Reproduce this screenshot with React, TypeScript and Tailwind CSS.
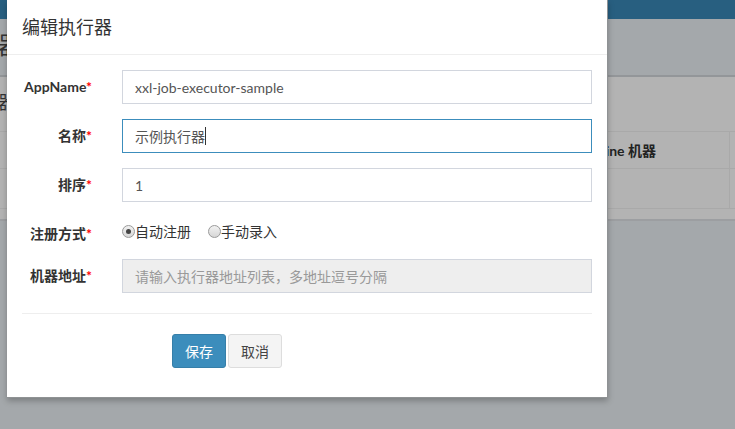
import React from "react";

const font = { fontFamily: 'Lato, "Noto Sans CJK SC", sans-serif' };

function Label({ text }: { text: string }) {
  return (
    <div className="w-[85px] shrink-0 pr-[15px] text-right text-[14px] font-bold text-[#333] leading-[20px] pt-[7px]">
      {text}
      <span className="text-[#ff0000]">*</span>
    </div>
  );
}

function Radio({ checked, text }: { checked?: boolean; text: string }) {
  return (
    <div className="flex items-center">
      <span className="w-[13px] h-[13px] rounded-full border border-[#9a9a9a] bg-gradient-to-b from-[#f2f2f2] to-[#d6d6d6] flex items-center justify-center">
        {checked && <span className="w-[5px] h-[5px] rounded-full bg-[#444]" />}
      </span>
      <span className="text-[14px] text-[#333] leading-[20px]">{text}</span>
    </div>
  );
}

export default function App() {
  return (
    <div className="relative w-[735px] h-[429px] overflow-hidden bg-[#a4a8ab]" style={font}>
      {/* background page */}
      <div className="h-[19px] bg-[#285f80]" />
      <div className="h-[56px] flex items-center">
        <span className="text-[24px] text-[#333] leading-none -mt-[4px] -ml-[2px]">器</span>
      </div>
      <div className="h-[2px] bg-[#939699]" />
      <div className="bg-[#b3b3b3] h-[142px] flex flex-col">
        <div className="h-[54px] flex items-center">
          <span className="text-[18px] text-[#333] leading-none -ml-[2px] mb-[4px]">器</span>
        </div>
        <div className="h-[38px] border-t border-b border-[#a9a9a9] flex">
          <div className="w-[730px] border-r border-[#a9a9a9] flex items-center justify-end pr-[73px]">
            <span className="text-[14px] font-bold text-[#222]">OnLine 机器</span>
          </div>
        </div>
        <div className="h-[40px] border-b border-[#a9a9a9] flex">
          <div className="w-[730px] border-r border-[#a9a9a9]" />
        </div>
      </div>
      <div className="h-[2px] bg-[#9c9ea1]" />

      {/* modal */}
      <div className="absolute left-[7px] top-0 w-[601px] h-[398px] bg-white border-r border-b border-[#8f9294] shadow-[0_3px_6px_rgba(0,0,0,0.25)]">
        <div className="h-[55px] border-b border-[#eeeeee] pl-[15px] flex items-center">
          <span className="text-[18px] font-normal text-[#333] leading-none">编辑执行器</span>
        </div>
        <div className="px-[15px] pt-[15px]">
          <div className="flex mb-[15px]">
            <Label text="AppName" />
            <div className="flex-1 pl-[15px]">
              <div className="h-[34px] border border-[#d2d6de] px-[12px] flex items-center text-[14px] text-[#555]">
                xxl-job-executor-sample
              </div>
            </div>
          </div>
          <div className="flex mb-[15px]">
            <Label text="名称" />
            <div className="flex-1 pl-[15px]">
              <div className="h-[34px] border border-[#3c8dbc] px-[12px] flex items-center text-[14px] text-[#555]">
                示例执行器<span className="w-px h-[18px] bg-[#333]" />
              </div>
            </div>
          </div>
          <div className="flex mb-[15px]">
            <Label text="排序" />
            <div className="flex-1 pl-[15px]">
              <div className="h-[34px] border border-[#d2d6de] px-[12px] flex items-center text-[14px] text-[#555]">
                1
              </div>
            </div>
          </div>
          <div className="flex mb-[15px] h-[27px]">
            <Label text="注册方式" />
            <div className="flex-1 pl-[15px] pt-[2px] flex gap-[17px]">
              <Radio checked text="自动注册" />
              <Radio text="手动录入" />
            </div>
          </div>
          <div className="flex">
            <Label text="机器地址" />
            <div className="flex-1 pl-[15px]">
              <div className="h-[34px] border border-[#d2d6de] bg-[#eeeeee] px-[12px] flex items-center text-[14px] text-[#999]">
                请输入执行器地址列表，多地址逗号分隔
              </div>
            </div>
          </div>
          <div className="mt-[20px] h-px bg-[#eeeeee]" />
          <div className="mt-[20px] flex gap-[2px] pl-[150px]">
            <button className="w-[54px] h-[34px] rounded-[3px] bg-[#3c8dbc] border border-[#367fa9] text-white text-[14px]">
              保存
            </button>
            <button className="w-[54px] h-[34px] rounded-[3px] bg-[#f4f4f4] border border-[#dddddd] text-[#444] text-[14px]">
              取消
            </button>
          </div>
        </div>
      </div>
    </div>
  );
}
